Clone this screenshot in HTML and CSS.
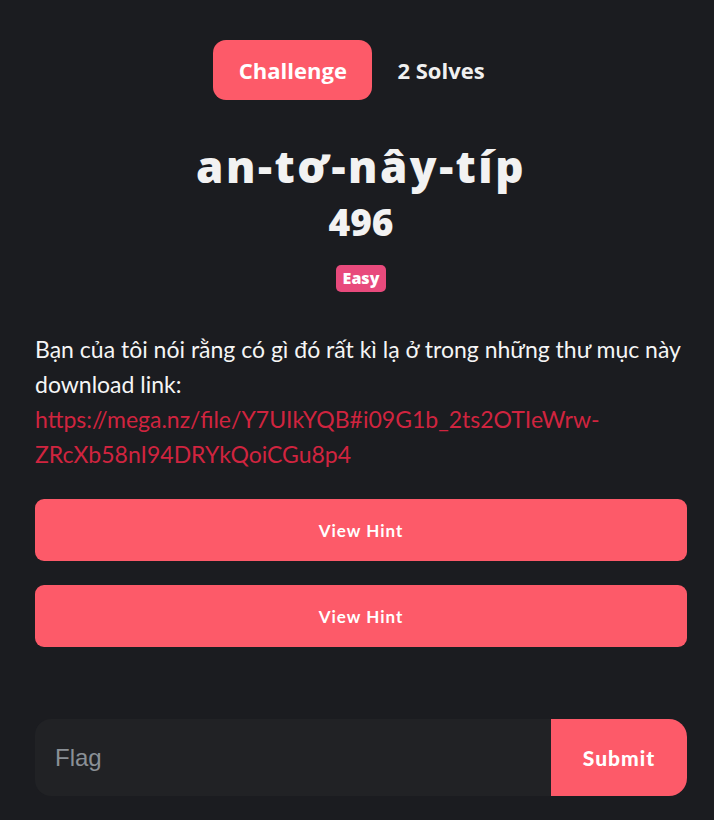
FILE: index.html
```html
<!DOCTYPE html>
<html lang="vi">
<head>
<meta charset="utf-8">
<link rel="stylesheet" href="styles.css">
</head>
<body>
<div class="modal">
  <div class="tabs">
    <span class="tab active">Challenge</span>
    <span class="tab">2 Solves</span>
  </div>
  <h1 class="title">an-tơ-nây-típ</h1>
  <div class="value">496</div>
  <div class="tags"><span class="badge">Easy</span></div>
  <div class="desc">
    <p>Bạn của tôi nói rằng có gì đó rất kì lạ ở trong những thư mục này<br>download link:<br><a href="#">https://mega.nz/file/Y7UIkYQB#i09G1b_2ts2OTIeWrw-ZRcXb58nI94DRYkQoiCGu8p4</a></p>
  </div>
  <div class="hints">
    <button class="hint">View Hint</button>
    <button class="hint">View Hint</button>
  </div>
  <form class="submit-row">
    <input class="flag" type="text" placeholder="Flag">
    <button class="submit" type="button">Submit</button>
  </form>
</div>
</body>
</html>
```
FILE: styles.css
```css
html, body {
  margin: 0;
  padding: 0;
  background: #1b1c20;
}
.modal {
  padding: 40px 27px 0 35px;
  font-family: Lato, "Noto Sans", sans-serif;
  color: #f2f2f2;
}
.tabs {
  display: flex;
  justify-content: center;
  align-items: center;
  gap: 25px;
  padding-right: 24px;
}
.tab {
  font-family: "Open Sans", sans-serif;
  font-weight: 700;
  font-size: 22px;
  color: #f0f0f0;
}
.tab.active {
  background: #fd5a69;
  color: #fff;
  border-radius: 13px;
  height: 60px;
  width: 159px;
  display: flex;
  align-items: center;
  justify-content: center;
}
.title {
  margin: 38px 0 0;
  text-align: center;
  font-family: "Open Sans", sans-serif;
  font-weight: 800;
  font-size: 44px;
  line-height: 56px;
  letter-spacing: 2.5px;
  color: #f2f2f2;
}
.value {
  margin-top: 7px;
  text-align: center;
  font-family: "Open Sans", sans-serif;
  font-weight: 800;
  font-size: 37px;
  line-height: 42px;
  color: #f2f2f2;
}
.tags {
  display: flex;
  justify-content: center;
  margin-top: 22px;
}
.badge {
  display: inline-block;
  background: #e84a7c;
  color: #fff;
  font-family: "Open Sans", sans-serif;
  font-weight: 800;
  font-size: 16px;
  line-height: 27px;
  padding: 0 7px;
  border-radius: 5px;
}
.desc {
  margin-top: 40px;
}
.desc p {
  margin: 0;
  font-size: 23px;
  line-height: 35px;
  color: #f5f5f5;
  word-break: break-word;
}
.desc a {
  color: #d0243f;
  text-decoration: none;
}
.hints {
  display: flex;
  flex-direction: column;
  gap: 24px;
  margin-top: 27px;
}
.hint {
  height: 62px;
  border: none;
  border-radius: 9px;
  background: #fd5a69;
  color: #fff;
  font-family: Lato, sans-serif;
  font-weight: 700;
  font-size: 17px;
  letter-spacing: 1px;
  cursor: pointer;
}
.submit-row {
  display: flex;
  margin: 72px 0 0;
  height: 77px;
}
.flag {
  flex: 1;
  min-width: 0;
  border: none;
  background: #212225;
  border-radius: 16px 0 0 16px;
  padding: 0 20px;
  font-family: "Liberation Sans", Arial, sans-serif;
  font-size: 24px;
  color: #fff;
  outline: none;
}
.flag::placeholder {
  color: #8a9096;
}
.submit {
  width: 136px;
  border: none;
  background: #fd5a69;
  border-radius: 0 18px 18px 0;
  color: #fff;
  font-family: Lato, sans-serif;
  font-weight: 900;
  font-size: 21px;
  letter-spacing: 1px;
}
```
